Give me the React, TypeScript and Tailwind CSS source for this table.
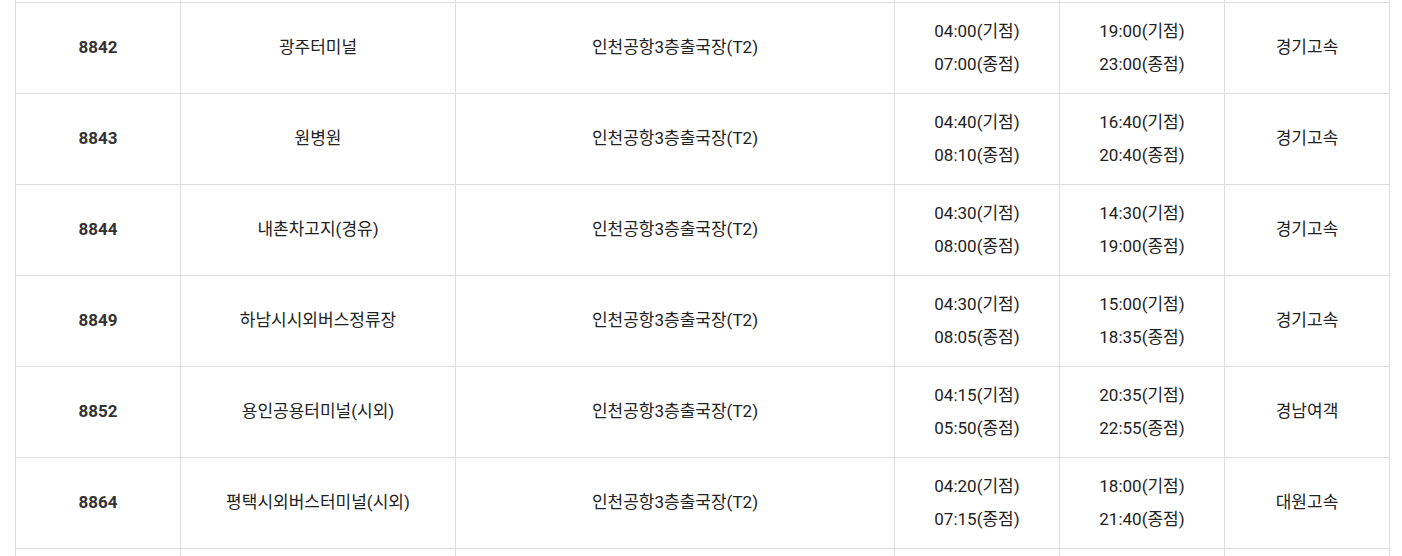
const rows = [
  ["8842", "광주터미널", "인천공항3층출국장(T2)", ["04:00(기점)", "07:00(종점)"], ["19:00(기점)", "23:00(종점)"], "경기고속"],
  ["8843", "원병원", "인천공항3층출국장(T2)", ["04:40(기점)", "08:10(종점)"], ["16:40(기점)", "20:40(종점)"], "경기고속"],
  ["8844", "내촌차고지(경유)", "인천공항3층출국장(T2)", ["04:30(기점)", "08:00(종점)"], ["14:30(기점)", "19:00(종점)"], "경기고속"],
  ["8849", "하남시시외버스정류장", "인천공항3층출국장(T2)", ["04:30(기점)", "08:05(종점)"], ["15:00(기점)", "18:35(종점)"], "경기고속"],
  ["8852", "용인공용터미널(시외)", "인천공항3층출국장(T2)", ["04:15(기점)", "05:50(종점)"], ["20:35(기점)", "22:55(종점)"], "경남여객"],
  ["8864", "평택시외버스터미널(시외)", "인천공항3층출국장(T2)", ["04:20(기점)", "07:15(종점)"], ["18:00(기점)", "21:40(종점)"], "대원고속"],
  ["", "", "", ["", ""], ["", ""], ""],
] as const;

const cols = "grid grid-cols-[166px_275px_439px_165px_165px_165px]";

export default function App() {
  return (
    <div
      className="bg-white w-[1402px] h-[556px] overflow-hidden text-[17px] text-[#222]"
      style={{ fontFamily: 'Roboto, "Noto Sans CJK KR", sans-serif' }}
    >
      <div className="ml-[15px] w-[1375px]">
        <div className={cols + " h-[2px]"}>
          {[0, 1, 2, 3, 4, 5].map((i) => (
            <div key={i} className={"border-r border-[#dddddd] " + (i === 0 ? "border-l" : "")} />
          ))}
        </div>
        <div className="border-t border-[#dddddd]">
          {rows.map((r, idx) => (
            <div key={idx} className={cols + " h-[91px]"}>
              <div className="border-l border-r border-b border-[#dddddd] flex items-center justify-center font-bold text-[#333]">
                {r[0]}
              </div>
              <div className="border-r border-b border-[#dddddd] flex items-center justify-center">{r[1]}</div>
              <div className="border-r border-b border-[#dddddd] flex items-center justify-center">{r[2]}</div>
              <div className="border-r border-b border-[#dddddd] flex flex-col items-center justify-center leading-[33px]">
                <div>{r[3][0]}</div>
                <div>{r[3][1]}</div>
              </div>
              <div className="border-r border-b border-[#dddddd] flex flex-col items-center justify-center leading-[33px]">
                <div>{r[4][0]}</div>
                <div>{r[4][1]}</div>
              </div>
              <div className="border-r border-b border-[#dddddd] flex items-center justify-center">{r[5]}</div>
            </div>
          ))}
        </div>
      </div>
    </div>
  );
}
